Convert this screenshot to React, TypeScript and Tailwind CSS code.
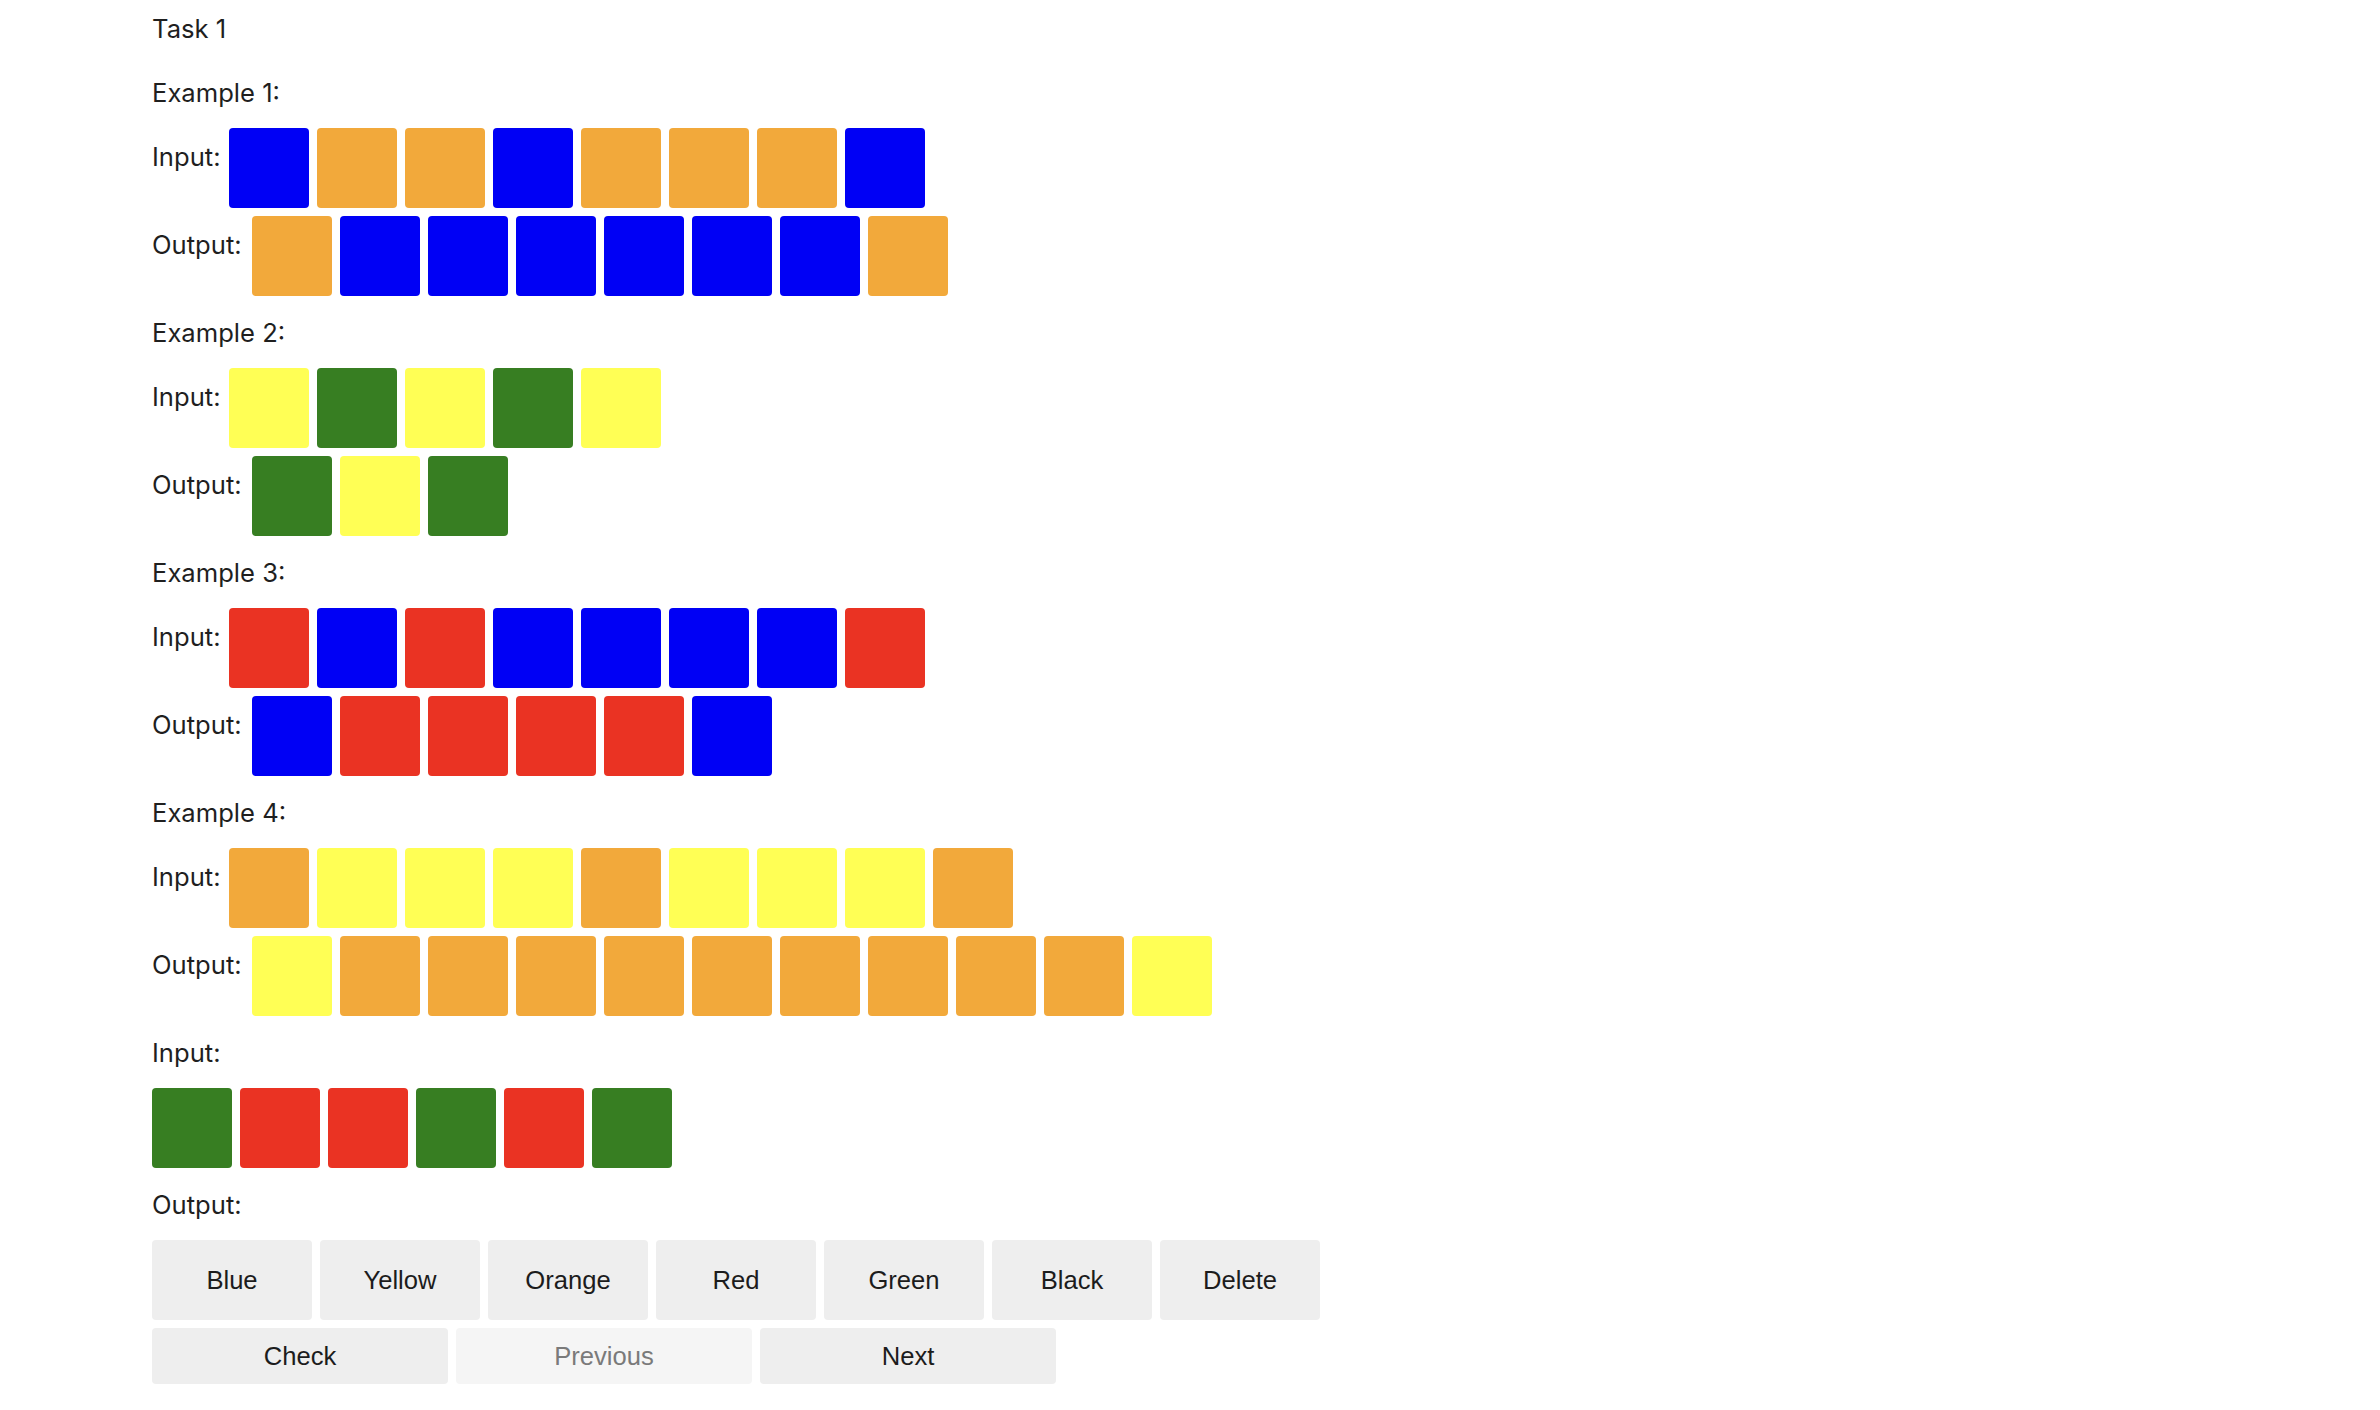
import { FC } from 'react';

type Color = 'B' | 'O' | 'Y' | 'G' | 'R';

const cellColor: Record<Color, string> = {
    B: 'bg-[#0000f5]',
    O: 'bg-[#f2a93b]',
    Y: 'bg-[#ffff55]',
    G: 'bg-[#377e22]',
    R: 'bg-[#ea3323]'
};

interface Example {
    input: Color[];
    output: Color[];
}

const examples: Example[] = [
    {
        input: ['B', 'O', 'O', 'B', 'O', 'O', 'O', 'B'],
        output: ['O', 'B', 'B', 'B', 'B', 'B', 'B', 'O']
    },
    {
        input: ['Y', 'G', 'Y', 'G', 'Y'],
        output: ['G', 'Y', 'G']
    },
    {
        input: ['R', 'B', 'R', 'B', 'B', 'B', 'B', 'R'],
        output: ['B', 'R', 'R', 'R', 'R', 'B']
    },
    {
        input: ['O', 'Y', 'Y', 'Y', 'O', 'Y', 'Y', 'Y', 'O'],
        output: ['Y', 'O', 'O', 'O', 'O', 'O', 'O', 'O', 'O', 'O', 'Y']
    }
];

const testInput: Color[] = ['G', 'R', 'R', 'G', 'R', 'G'];

const colorButtons = ['Blue', 'Yellow', 'Orange', 'Red', 'Green', 'Black', 'Delete'];

const Cells: FC<{ cells: Color[] }> = ({ cells }) => (
    <div className="flex flex-row gap-[8px]">
        {cells.map((c, i) => (
            <div
                key={i}
                className={`h-[80px] w-[80px] rounded-[4px] ${cellColor[c]}`}
            />
        ))}
    </div>
);

const Heading: FC<{ text: string }> = ({ text }) => (
    <div className="h-[32px] leading-[32px]">{text}</div>
);

const Row: FC<{ label: string; width: string; cells: Color[] }> = ({
    label,
    width,
    cells
}) => (
    <div className="flex flex-row items-start">
        <div className={`${width} shrink-0 whitespace-nowrap pt-[13px] leading-[32px]`}>
            {label}
        </div>
        <Cells cells={cells} />
    </div>
);

const App: FC = () => {
    return (
        <div
            className="min-h-[1410px] bg-white pl-[152px] pt-[13px] text-[25.6px] text-[#1f1f1f]"
            style={{ fontFamily: 'Inter, "Noto Sans", sans-serif' }}
        >
            <Heading text="Task 1" />
            <div className="mt-[32px] flex flex-col gap-[21px]">
                {examples.map((ex, i) => (
                    <div key={i} className="flex flex-col">
                        <Heading text={`Example ${i + 1}:`} />
                        <div className="mt-[19px] flex flex-col gap-[8px]">
                            <Row label="Input:" width="w-[77px]" cells={ex.input} />
                            <Row label="Output:" width="w-[100px]" cells={ex.output} />
                        </div>
                    </div>
                ))}
                <div className="flex flex-col">
                    <Heading text="Input:" />
                    <div className="mt-[19px]">
                        <Cells cells={testInput} />
                    </div>
                </div>
                <div className="flex flex-col">
                    <Heading text="Output:" />
                    <div
                        className="mt-[19px] flex flex-col gap-[8px]"
                        style={{ fontFamily: '"Liberation Sans", Arial, sans-serif' }}
                    >
                        <div className="flex flex-row gap-[8px]">
                            {colorButtons.map(b => (
                                <button
                                    key={b}
                                    className="flex h-[80px] w-[160px] items-center justify-center rounded-[4px] bg-[#eeeeee] text-[25.6px] text-[#1c1c1c]"
                                >
                                    {b}
                                </button>
                            ))}
                        </div>
                        <div className="flex flex-row gap-[8px]">
                            <button className="flex h-[56px] w-[296px] items-center justify-center rounded-[4px] bg-[#eeeeee] text-[25.6px] text-[#1c1c1c]">
                                Check
                            </button>
                            <button
                                disabled
                                className="flex h-[56px] w-[296px] items-center justify-center rounded-[4px] bg-[#f5f5f5] text-[25.6px] text-[#7a7a7a]"
                            >
                                Previous
                            </button>
                            <button className="flex h-[56px] w-[296px] items-center justify-center rounded-[4px] bg-[#eeeeee] text-[25.6px] text-[#1c1c1c]">
                                Next
                            </button>
                        </div>
                    </div>
                </div>
            </div>
        </div>
    );
};

export default App;
